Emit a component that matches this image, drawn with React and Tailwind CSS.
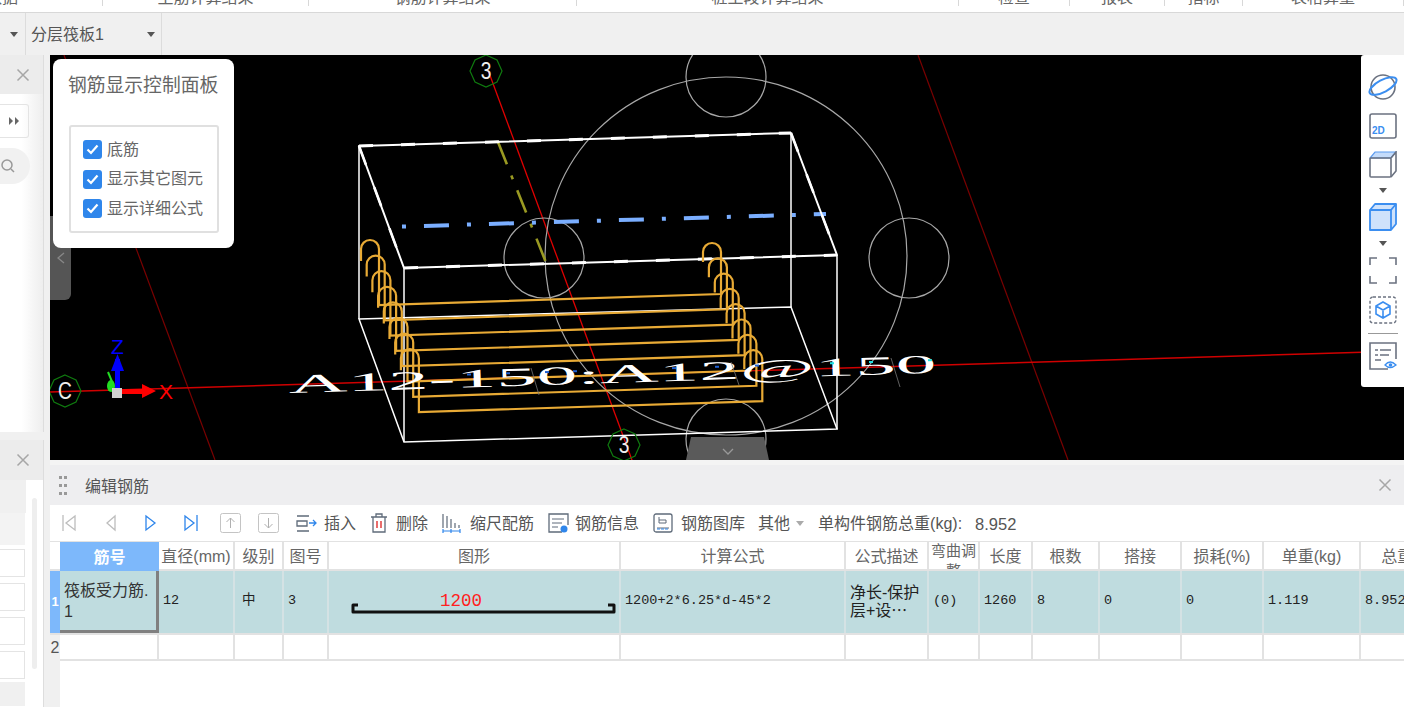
const cjk = { fontFamily: '"Liberation Sans", "Noto Sans CJK SC", sans-serif' };
const mono = { fontFamily: '"Liberation Mono", "Noto Sans CJK SC", monospace' };

const topTabs = [
  { label: "数据", w: 103 },
  { label: "主筋计算结果", w: 206 },
  { label: "钢筋计算结果", w: 268 },
  { label: "桩土段计算结果", w: 382 },
  { label: "检查", w: 111 },
  { label: "报表", w: 95 },
  { label: "指标", w: 78 },
  { label: "表格算量", w: 161 },
];

const columns = [
  { title: "筋号" },
  { title: "直径(mm)", value: "12" },
  { title: "级别", value: "中" },
  { title: "图号", value: "3" },
  { title: "图形" },
  { title: "计算公式", value: "1200+2*6.25*d-45*2" },
  { title: "公式描述" },
  { title: "弯曲调整", value: "(0)" },
  { title: "长度", value: "1260" },
  { title: "根数", value: "8" },
  { title: "搭接", value: "0" },
  { title: "损耗(%)", value: "0" },
  { title: "单重(kg)", value: "1.119" },
  { title: "总重(kg)", value: "8.952" },
];

const bars = [0, 1, 2, 3, 4, 5, 6, 7];
// 标注文字上的蓝色和青色反光
const blueMarks = [467, 506, 545, 573, 672, 715, 755];
const cyanMarks = [830, 869, 928];

// 3D 视图里的钢筋、线框和轴网
const SceneDrawing = () => (
  <svg width="1354" height="405" viewBox="50 55 1354 405" className="block">
    <line x1="64" y1="55" x2="215" y2="460" stroke="#7a0000" strokeWidth="1.2" />
    <line x1="918" y1="55" x2="1068" y2="460" stroke="#7a0000" strokeWidth="1.2" />
    <line x1="50" y1="392" x2="1404" y2="351" stroke="#d00000" strokeWidth="1.4" />
    <line x1="488" y1="70" x2="632" y2="460" stroke="#e00000" strokeWidth="1.3" />

    <g fill="none" stroke="#a8a8a8" strokeWidth="1.2">
      <ellipse cx="726" cy="256" rx="181" ry="179" />
      <ellipse cx="726" cy="77" rx="40" ry="40" />
      <ellipse cx="544" cy="258" rx="40" ry="40" />
      <ellipse cx="909" cy="258" rx="40" ry="40" />
      <ellipse cx="726" cy="439" rx="40" ry="40" />
    </g>

    <line x1="498" y1="142" x2="547" y2="265" stroke="#9a9a22" strokeWidth="2.6" strokeDasharray="24 12 4 12" />
    <line x1="386" y1="227" x2="826" y2="214" stroke="#7aaeff" strokeWidth="4" strokeDasharray="25 18 4 18" strokeDashoffset="27" />

    <g stroke="#fff" fill="none">
      <path d="M359 319 L791 307 L837 429 L404 442 Z" strokeWidth="1.5" />
      <path d="M359 146 V319 M791 133 V307 M404 268 V442 M837 255 V429" strokeWidth="1.5" />
      <path d="M359 146 L791 133 L837 255 L404 268 Z" strokeWidth="2" strokeLinejoin="round" />
      <path d="M359 146 L791 133 M404 268 L837 255" strokeWidth="3" strokeDasharray="14 28" />
      <path d="M359 146 L404 268 M791 133 L837 255" strokeWidth="2.600" strokeDasharray="20 24" />
    </g>

    <g fill="none" stroke="#e8aa35" strokeWidth="2.2">
      {bars.map((i) => {
        const lx = 370 + i * 5.7;
        const ly = 240 + i * 15.6;
        const rx = 712 + i * 5.9;
        const ry = 243 + i * 15.3;
        const lBar = 305 + i * 15.3;
        const rBar = 294 + i * 15.3;
        return (
          <path
            key={i}
            d={`M${lx - 9} ${ly + 21} V${ly + 9} A9 9 0 0 1 ${lx + 9} ${ly + 9} V${lBar} L${rx + 9} ${rBar} V${ry + 9} A9 9 0 0 0 ${rx - 9} ${ry + 9} V${ry + 19}`}
          />
        );
      })}
    </g>

    <text
      x="289"
      y="393"
      transform="rotate(-1.8 289 393)"
      fill="#fff"
      fontSize="26"
      textLength="648"
      lengthAdjust="spacingAndGlyphs"
      style={{ fontFamily: '"Liberation Serif", serif' }}
    >
      A12-150:A12@150
    </text>
    <g strokeWidth="2">
      {blueMarks.map((x) => (
        <line key={x} x1={x} y1={392 - (x - 289) * 0.031 - 12} x2={x + 4} y2={392 - (x - 289) * 0.031 - 12} stroke="#2060d0" />
      ))}
      {cyanMarks.map((x) => (
        <line key={x} x1={x} y1={392 - (x - 289) * 0.031 - 12} x2={x + 4} y2={392 - (x - 289) * 0.031 - 12} stroke="#20e0e0" />
      ))}
    </g>
    <path d="M531 368 L539 395 M731 362 L739 385 M891 358 L900 387" stroke="#777" strokeWidth="0.8" />

    <g fill="none" stroke="#0f7a0f" strokeWidth="1.2">
      <polygon points="486,55 497,60 502,71 497,82 486,87 475,82 470,71 475,60" />
      <polygon points="624,429 635,434 640,445 635,456 624,461 613,456 608,445 613,434" />
      <polygon points="65,375 76,380 81,391 76,402 65,407 54,402 49,391 54,380" />
    </g>
    <g fill="#eee" fontSize="24" textAnchor="middle" style={{ fontFamily: '"Liberation Sans", sans-serif' }}>
      <text transform="translate(486 79) scale(0.8 1)">3</text>
      <text transform="translate(624 453) scale(0.8 1)">3</text>
      <text transform="translate(65 399) scale(0.8 1)">C</text>
    </g>

    {/* 坐标轴 */}
    <path d="M108 372 L113 384" stroke="#22dd22" strokeWidth="2" />
    <ellipse cx="111" cy="386" rx="4" ry="6" fill="#22dd22" />
    <rect x="115" y="359" width="5" height="31" fill="#0000ff" />
    <path d="M117.5 354 L124 371 H111 Z" fill="#0000ff" />
    <text x="117.500" y="354" fill="#0000ff" fontSize="21" textAnchor="middle" style={{ fontFamily: '"Liberation Sans", sans-serif' }}>Z</text>
    <rect x="122" y="389" width="22" height="5" fill="#ff0000" />
    <path d="M156 391 L142 384 V398 Z" fill="#ff0000" />
    <text x="166" y="399" fill="#ff0000" fontSize="21" textAnchor="middle" style={{ fontFamily: '"Liberation Sans", sans-serif' }}>X</text>
    <rect x="112" y="388" width="10" height="10" fill="#d0d0d0" />
  </svg>
);

const Cross = ({ className = "" }) => (
  <svg width="14" height="14" viewBox="0 0 14 14" className={className}>
    <path d="M1.500 1.500 L12.500 12.500 M12.500 1.500 L1.500 12.500" stroke="#a6a6a6" strokeWidth="1.500" />
  </svg>
);

const Caret = ({ className = "" }) => (
  <svg width="8" height="5" viewBox="0 0 8 5" className={className}>
    <path d="M0 0 H8 L4 5 Z" fill="currentColor" />
  </svg>
);

const Check = ({ label }) => (
  <label className="flex h-[29.500px] items-center">
    <span className="flex h-[19px] w-[19px] items-center justify-center rounded-[3px] bg-[#2f86eb]">
      <svg width="13" height="11" viewBox="0 0 13 11">
        <path d="M1.500 5.500 L5 9 L11.500 1.500" fill="none" stroke="#fff" strokeWidth="2.200" />
      </svg>
    </span>
    <span className="ml-[5px] text-base leading-none text-[#666]">{label}</span>
  </label>
);

const sideStroke = { fill: "none", stroke: "#6b7280", strokeWidth: 1.600 };

// 右侧视图工具条
const ViewToolbar = () => (
  <div className="absolute right-0 top-0 flex h-[332px] w-[43px] flex-col items-center rounded-l-[3px] bg-white pt-[18px]">
    <svg width="30" height="28" viewBox="0 0 30 28">
      <circle cx="15" cy="14" r="12" {...sideStroke} />
      <ellipse cx="15" cy="13" rx="15" ry="6" transform="rotate(-28 15 13)" fill="none" stroke="#3b8ef0" strokeWidth="2" />
    </svg>
    <svg width="28" height="26" viewBox="0 0 28 26" className="mt-[12px]">
      <rect x="1" y="1" width="26" height="24" rx="2" {...sideStroke} />
      <text x="3" y="21" fontSize="10" fontWeight="700" fill="#3b8ef0" style={{ fontFamily: '"Liberation Sans", sans-serif' }}>2D</text>
    </svg>
    <svg width="28" height="27" viewBox="0 0 28 27" className="mt-[12px]">
      <path d="M6 1 H27 L22 7 H1 Z" fill="#c4dcfb" stroke="#5b9bf0" strokeWidth="1.200" />
      <rect x="1" y="7" width="21" height="19" rx="1" {...sideStroke} />
      <path d="M22 7 L27 1 V20 L22 26" {...sideStroke} />
    </svg>
    <Caret className="mt-[10px] text-[#555]" />
    <svg width="28" height="28" viewBox="0 0 28 28" className="mt-[10px]">
      <path d="M6 1 H27 V21 L22 27 H1 V7 Z" fill="#cfe2fb" stroke="#3b8ef0" strokeWidth="1.800" strokeLinejoin="round" />
      <path d="M1 7 H22 V27 M22 7 L27 1" fill="none" stroke="#3b8ef0" strokeWidth="1.800" />
    </svg>
    <Caret className="mt-[10px] text-[#555]" />
    <svg width="28" height="27" viewBox="0 0 28 27" className="mt-[11px]">
      <path d="M1 8 V1 H8 M20 1 H27 V8 M27 19 V26 H20 M8 26 H1 V19" {...sideStroke} />
    </svg>
    <svg width="28" height="28" viewBox="0 0 28 28" className="mt-[12px]">
      <rect x="1" y="1" width="26" height="26" rx="3" fill="none" stroke="#6b7280" strokeWidth="1.400" strokeDasharray="3 2" />
      <path d="M14 6 L21 10 V18 L14 22 L7 18 V10 Z M7 10 L14 14 L21 10 M14 14 V22" fill="none" stroke="#3b8ef0" strokeWidth="1.600" />
    </svg>
    <div className="mt-[9px] h-px w-[30px] shrink-0 bg-[#999]" />
    <svg width="28" height="28" viewBox="0 0 28 28" className="mt-[8px]">
      <path d="M19 27 H1 V1 H27 V17" {...sideStroke} />
      <path d="M6 8 H9 M11 8 H22 M6 13 H9 M11 13 H20 M6 18 H12" {...sideStroke} />
      <path d="M16 23 Q21 17 27 23 Q21 28 16 23 Z" fill="#fff" stroke="#3b8ef0" strokeWidth="1.300" />
      <circle cx="21.500" cy="23" r="1.800" fill="#3b8ef0" />
    </svg>
  </div>
);

const NavIcon = ({ d, color, className = "" }) => (
  <svg width="16" height="18" viewBox="0 0 16 18" className={className}>
    <path d={d} fill="none" stroke={color} strokeWidth="1.300" />
  </svg>
);

const BoxArrow = ({ d, className = "" }) => (
  <svg width="21" height="20" viewBox="0 0 21 20" className={className}>
    <rect x="0.500" y="0.500" width="20" height="19" rx="2" fill="none" stroke="#c4c4c4" />
    <path d={d} fill="none" stroke="#b0b0b0" />
  </svg>
);

const ToolLabel = ({ children, className = "" }) => (
  <span className={`pt-[2px] text-base leading-none whitespace-nowrap text-[#555] ${className}`}>{children}</span>
);

const EditToolbar = () => (
  <div className="flex h-[37px] items-center border-b border-[#e2e2e2] bg-white pl-[11px]">
    <NavIcon d="M2 1 V17 M14 2 L5 9 L14 16 Z" color="#bdbdbd" />
    <NavIcon d="M10 2 L2 9 L10 16 Z" color="#bdbdbd" className="ml-[28px]" />
    <NavIcon d="M2 2 L11 9 L2 16 Z" color="#2f86eb" className="ml-[23px]" />
    <NavIcon d="M2 2 L11 9 L2 16 Z M14 1 V17" color="#2f86eb" className="ml-[23px]" />
    <BoxArrow d="M10.500 15 V5 M6.500 9 L10.500 5 L14.500 9" className="ml-[21px]" />
    <BoxArrow d="M10.500 5 V15 M6.500 11 L10.500 15 L14.500 11" className="ml-[17px]" />
    <svg width="21" height="17" viewBox="0 0 21 17" className="ml-[17px]">
      <path d="M1 1 H13 M1 6 H11 V11 H1 Z M1 16 H13" fill="none" stroke="#5f6b7a" strokeWidth="1.300" />
      <path d="M13 8 H20 M17 5 L20 8 L17 11" fill="none" stroke="#2f86eb" strokeWidth="1.300" />
    </svg>
    <ToolLabel className="ml-[7px]">插入</ToolLabel>
    <svg width="18" height="20" viewBox="0 0 18 20" className="ml-[14px]">
      <path d="M1 4 H17 M6 4 V1 H12 V4 M3 4 V19 H15 V4" fill="none" stroke="#5f6b7a" strokeWidth="1.300" />
      <path d="M7 8 V15 M11 8 V15" stroke="#e03030" strokeWidth="1.400" />
    </svg>
    <ToolLabel className="ml-[8px]">删除</ToolLabel>
    <svg width="19" height="20" viewBox="0 0 19 20" className="ml-[14px]">
      <path d="M1 1 V15 M5 3 V15 M9 6 V15 M13 10 V15 M17 12 V15" stroke="#5f6b7a" strokeWidth="1.200" />
      <path d="M1 18 H18 M1 16 V20 M9 16 V20 M18 16 V20" stroke="#2f86eb" strokeWidth="1.200" />
    </svg>
    <ToolLabel className="ml-[9px]">缩尺配筋</ToolLabel>
    <svg width="21" height="20" viewBox="0 0 21 20" className="ml-[14px]">
      <path d="M14 19 H1 V1 H20 V12" fill="none" stroke="#5f6b7a" strokeWidth="1.300" />
      <path d="M4 6 H16 M4 10 H14 M4 14 H10" stroke="#5f6b7a" />
      <circle cx="16" cy="16" r="3.500" fill="#2f86eb" />
    </svg>
    <ToolLabel className="ml-[6px]">钢筋信息</ToolLabel>
    <svg width="20" height="20" viewBox="0 0 20 20" className="ml-[14px]">
      <rect x="1" y="1" width="18" height="18" rx="2" fill="none" stroke="#5f6b7a" strokeWidth="1.300" />
      <path d="M6 4 V10 H13 V7 H6 M4 15 H16" fill="none" stroke="#5f6b7a" />
      <path d="M4 16 H16" stroke="#2f86eb" strokeDasharray="3 1" />
    </svg>
    <ToolLabel className="ml-[8px]">钢筋图库</ToolLabel>
    <ToolLabel className="ml-[13px]">其他</ToolLabel>
    <Caret className="ml-[6px] text-[#aaa]" />
    <ToolLabel className="ml-[14px]">单构件钢筋总重(kg):</ToolLabel>
    <span className="ml-[13px] pt-[2px] text-[16.500px] leading-none text-[#555]">8.952</span>
  </div>
);

const HeadCell = ({ col, index }) => {
  if (index === 0) {
    return (
      <div className="flex items-center justify-center bg-[#7db8fb] pt-[2px] text-base font-bold text-white">{col.title}</div>
    );
  }
  if (col.title === "弯曲调整") {
    return (
      <div className="overflow-hidden border-r-2 border-b-2 border-[#e2e2e2] bg-white text-center text-[15px] leading-[20px] text-[#666]">
        <div className="-mt-[1px]">{col.title}</div>
      </div>
    );
  }
  return (
    <div className="flex items-center justify-center border-r-2 border-b-2 border-[#e2e2e2] bg-white pt-[2px] text-base whitespace-nowrap text-[#666]">
      {col.title}
    </div>
  );
};

const DataCell = ({ col }) => (
  <div
    className={`flex items-center border-r-2 border-[#d4e2e4] bg-[#bfdcdf] pb-[2px] text-[13.500px] whitespace-nowrap text-[#222] ${col.title === "级别" ? "pl-[7px]" : "pl-[4px]"}`}
    style={mono}
  >
    {col.value}
  </div>
);

const RebarTable = () => (
  <div className="grid grid-cols-[10px_99px_76px_49px_45px_292px_225px_83px_51px_53px_67px_82px_82px_97px_102px] grid-rows-[29px_62px_28px] bg-white">
    <div className="border-b-2 border-[#e2e2e2] bg-white" />
    {columns.map((col, i) => (
      <HeadCell key={col.title} col={col} index={i} />
    ))}

    <div className="flex items-center justify-center bg-[#7db8fb] text-[13px] font-bold text-white">1</div>
    <div className="flex items-center border-r-[3px] border-b-[3px] border-[#808080] bg-[#bfdcdf] pl-[4px] text-base leading-[21px] text-[#333]">
      <span>
        筏板受力筋.
        <br />1
      </span>
    </div>
    {columns.slice(1).map((col) => {
      if (col.title === "图形") {
        return (
          <div key={col.title} className="border-r-2 border-[#d4e2e4] bg-[#bfdcdf]">
            <svg width="290" height="62" viewBox="0 0 290 62" className="block">
              <path d="M29 34 H24 V41 H285 V34 H279" fill="none" stroke="#111" strokeWidth="3" strokeLinejoin="round" />
              <text x="111" y="35" fill="#ff2020" fontSize="17.500" style={{ fontFamily: '"Liberation Mono", monospace' }}>1200</text>
            </svg>
          </div>
        );
      }
      if (col.title === "公式描述") {
        return (
          <div key={col.title} className="flex items-center border-r-2 border-[#d4e2e4] bg-[#bfdcdf] pl-[4px] text-base leading-[18px] text-[#222]">
            <span>
              净长-保护
              <br />层+设⋯
            </span>
          </div>
        );
      }
      return <DataCell key={col.title} col={col} />;
    })}

    <div className="flex items-center justify-center border-t-2 border-[#e2e2e2] bg-[#f0f0f0] text-base text-[#555]">2</div>
    {columns.map((col) => (
      <div key={col.title} className="border-t-2 border-r-2 border-b-2 border-[#e2e2e2] bg-white" />
    ))}
  </div>
);

const SidePanels = () => (
  <div className="flex w-[44px] shrink-0 flex-col bg-[#f0f0f0]">
    <div className="flex h-[377px] flex-col overflow-hidden border-r border-[#ddd] bg-gradient-to-r from-white via-white to-[#eeeeee]">
      <div className="flex h-[39px] shrink-0 items-center justify-end bg-[#ececec] pr-[13px]">
        <Cross />
      </div>
      <div className="mt-[10px] flex h-[34px] w-[29px] items-center justify-end rounded-r-[3px] border border-l-0 border-[#e4e4e4] pr-[9px]">
        <svg width="10" height="8" viewBox="0 0 10 8">
          <path d="M0 0 L4 4 L0 8 Z M6 0 L10 4 L6 8 Z" fill="#666" />
        </svg>
      </div>
      <div className="mt-[10px] flex h-[36px] w-[30px] items-center rounded-r-[18px] bg-[#f1f1f1] pl-[1px]">
        <svg width="14" height="14" viewBox="0 0 14 14">
          <circle cx="6" cy="6" r="5" fill="none" stroke="#999" strokeWidth="1.500" />
          <path d="M10 10 L13 13" stroke="#999" strokeWidth="1.500" />
        </svg>
      </div>
    </div>
    <div className="mt-[8px] flex flex-1 flex-col overflow-hidden border-r border-[#ddd] bg-white">
      <div className="flex h-[40px] shrink-0 items-center justify-end bg-[#ececec] pr-[13px]">
        <Cross />
      </div>
      <div className="relative flex flex-col gap-[6px]">
        <div className="h-[33px] w-[26px] bg-[#f0f0f0]" />
        <div className="-mt-[6px] h-[32px] w-[25px] bg-[#f3f3f3]" />
        <div className="-mt-[2px] h-[28px] w-[25px] border border-l-0 border-[#e4e4e4]" />
        <div className="h-[28px] w-[25px] border border-l-0 border-[#e4e4e4]" />
        <div className="h-[28px] w-[25px] border border-l-0 border-[#e4e4e4]" />
        <div className="h-[28px] w-[25px] border border-l-0 border-[#e4e4e4]" />
        <div className="-mt-[3px] h-[24px] w-[25px] bg-[#f0f0f0]" />
        <div className="absolute top-[18px] left-[32px] h-[171px] w-[5px] rounded-full bg-[#eeeeee]" />
      </div>
    </div>
  </div>
);

export default function App() {
  return (
    <div className="flex h-[707px] w-[1404px] flex-col overflow-hidden bg-[#f0f0f0]" style={cjk}>
      {/* 顶部页签, 文字被窗口裁掉一半 */}
      <div className="h-[13px] shrink-0 overflow-hidden border-b border-[#d8d8d8] bg-white">
        <div className="flex h-[6px] overflow-hidden">
          {topTabs.map((tab, i) => (
            <div
              key={tab.label}
              className={`flex shrink-0 border-r border-[#d8d8d8] text-base leading-none text-[#666] ${i === 0 ? "justify-start" : "justify-center"}`}
              style={{ width: tab.w }}
            >
              <span className={`-mt-[10px] whitespace-nowrap ${i === 0 ? "-ml-[14px]" : ""}`}>{tab.label}</span>
            </div>
          ))}
        </div>
      </div>

      <div className="flex h-[42px] shrink-0 bg-[#f0f0f0]">
        <div className="flex w-[26px] items-center justify-end border-r border-[#dcdcdc] pr-[7px]">
          <Caret className="text-[#555]" />
        </div>
        <div className="flex w-[136px] items-center justify-between border-r border-[#dcdcdc] pr-[6px] pl-[5px]">
          <span className="pt-[1px] text-base text-[#555]">分层筏板1</span>
          <Caret className="text-[#555]" />
        </div>
      </div>

      <div className="flex min-h-0 flex-1">
        <SidePanels />
        <div className="flex w-[6px] shrink-0 bg-[#f0f0f0]" />
        <div className="flex min-w-0 flex-1 flex-col overflow-hidden">
          <div className="relative h-[405px] shrink-0 bg-black">
            <SceneDrawing />

            {/* 左右收起把手 */}
            <div className="absolute top-[161px] left-0 flex h-[84px] w-[21px] items-center justify-center rounded-br-[6px] bg-[#555]">
              <svg width="8" height="12" viewBox="0 0 8 12">
                <path d="M7 1 L1 6 L7 11" fill="none" stroke="#888" strokeWidth="1.300" />
              </svg>
            </div>
            <div className="absolute bottom-0 left-[636px] flex h-[23px] w-[83px] items-end justify-center bg-[#5a5a5a] pb-[5px] [clip-path:polygon(6%_0,94%_0,100%_100%,0_100%)]">
              <svg width="12" height="7" viewBox="0 0 12 7">
                <path d="M1 1 L6 6 L11 1" fill="none" stroke="#999" strokeWidth="1.300" />
              </svg>
            </div>

            {/* 钢筋显示控制面板 */}
            <div className="absolute top-[4px] left-[3px] h-[189px] w-[181px] rounded-lg bg-white pt-[15px] pl-[15px]">
              <div className="text-[18.800px] leading-[24px] text-[#666]">钢筋显示控制面板</div>
              <div className="mt-[27px] ml-[1px] h-[108px] w-[150px] rounded-[3px] border-2 border-[#e0e0e0] pt-[8px] pl-[12px]">
                <Check label="底筋" />
                <Check label="显示其它图元" />
                <Check label="显示详细公式" />
              </div>
            </div>

            <ViewToolbar />
          </div>

          <div className="h-[5px] shrink-0 bg-[#f4f4f4]" />

          <div className="flex min-h-0 flex-1 flex-col bg-white">
            <div className="flex h-[40px] shrink-0 items-center bg-[#eeeef0] pr-[12px] pl-[9px]">
              <div className="grid grid-cols-2 gap-x-[2px] gap-y-[5px]">
                {[0, 1, 2, 3, 4, 5].map((d) => (
                  <span key={d} className="h-[3px] w-[3px] bg-[#999]" />
                ))}
              </div>
              <span className="ml-[18px] pt-[3px] text-base text-[#555]">编辑钢筋</span>
              <Cross className="ml-auto" />
            </div>
            <EditToolbar />
            <RebarTable />
            <div className="min-h-0 flex-1">
              <div className="h-full w-[10px] bg-[#f0f0f0]" />
            </div>
          </div>
        </div>
      </div>
    </div>
  );
}
